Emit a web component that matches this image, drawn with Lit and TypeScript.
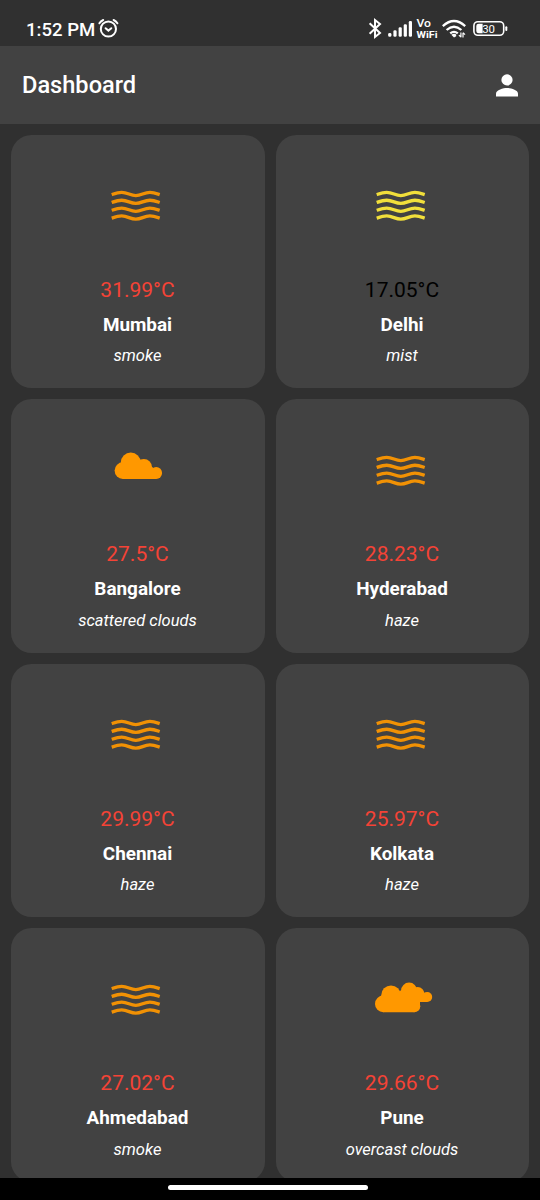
import { LitElement, html, svg, css } from "lit";
import { customElement, property } from "lit/decorators.js";

type Kind = "waves" | "cloud" | "clouds";
interface City { name: string; temp: string; desc: string; kind: Kind; tint?: "mist"; }

const cities: City[] = [
  { name: "Mumbai", temp: "31.99°C", desc: "smoke", kind: "waves" },
  { name: "Delhi", temp: "17.05°C", desc: "mist", kind: "waves", tint: "mist" },
  { name: "Bangalore", temp: "27.5°C", desc: "scattered clouds", kind: "cloud" },
  { name: "Hyderabad", temp: "28.23°C", desc: "haze", kind: "waves" },
  { name: "Chennai", temp: "29.99°C", desc: "haze", kind: "waves" },
  { name: "Kolkata", temp: "25.97°C", desc: "haze", kind: "waves" },
  { name: "Ahmedabad", temp: "27.02°C", desc: "smoke", kind: "waves" },
  { name: "Pune", temp: "29.66°C", desc: "overcast clouds", kind: "clouds" },
];

const icons = {
  waves: svg`<g fill="none" stroke="currentColor" stroke-width="3.3" opacity=".93">
    ${[0, 7.85, 15.7, 23.55].map(
      (y) => svg`<path transform="translate(0 ${y})" d="M11.7 19.6C14.7 18.6 18.2 17.4 21.7 17.4C27.7 17.4 30.2 20.6 35.8 20.6C41.4 20.6 43.9 17.4 49.9 17.4C53.4 17.4 56.7 18.6 59.7 19.6"/>`
    )}</g>`,
  cloud: svg`<g fill="currentColor"><circle cx="22.9" cy="30.6" r="8.3"/><circle cx="30.8" cy="22.6" r="10"/>
    <circle cx="43.8" cy="27.4" r="8.3"/><circle cx="56.2" cy="33" r="5.9"/><path d="M22.7 24H48L53.4 28L56.2 31V38.9H22.7Z"/></g>`,
  clouds: svg`<g fill="currentColor"><circle cx="18.3" cy="34.9" r="8.3"/><circle cx="26" cy="26.3" r="9.8"/>
    <circle cx="38.2" cy="30.5" r="8"/>
    <circle cx="44.1" cy="21.6" r="8"/><circle cx="52.7" cy="24.6" r="6.6"/><circle cx="62.2" cy="28" r="5"/>
    <circle cx="49.3" cy="37.2" r="6"/><path d="M18.3 28L34 22.5L40 19H50L62.2 25V33H55V38L49.3 43.2H18.3Z"/></g>`,
};

@customElement("weather-card")
class WeatherCard extends LitElement {
  @property({ attribute: false }) city!: City;
  static styles = css`
    :host { display: block; }
    .card { box-sizing: border-box; height: 100%; padding: 40.5px 0.5px 0 0; border-radius: 20.6px;
      background: #424242; display: flex; flex-direction: column; align-items: center; color: #fff; }
    .icon { display: block; width: 75px; height: 60px; color: #ff9800; }
    .icon.mist { color: #ffeb3b; }
    .temp { margin-top: 42.9px; font-size: 21px; line-height: 24px; color: #f44336; }
    .temp.mist { color: #000; }
    .name { margin-top: 12px; font-size: 18.9px; line-height: 22px; font-weight: 700; }
    .desc { margin-top: 10.4px; font-size: 16.5px; line-height: 20px; font-style: italic; }
  `;
  render() {
    const c = this.city;
    const tint = c.tint ?? "";
    return html`<div class="card">
      <svg class="icon ${tint}" viewBox="0 0 75 60">${icons[c.kind]}</svg>
      <div class="temp ${tint}">${c.temp}</div>
      <div class="name">${c.name}</div>
      <div class="desc">${c.desc}</div>
    </div>`;
  }
}

@customElement("status-bar")
class StatusBar extends LitElement {
  static styles = css`
    :host { display: flex; height: 46px; box-sizing: border-box; padding: 0 0 0 26px; color: #fff; background: #303030; }
    .time { width: 72px; padding-top: 19px; font-size: 18.6px; line-height: 22px; font-weight: 500; white-space: nowrap; }
    .alarm { width: 22px; height: 46px; }
    .spacer { flex: 1; }
    .system { width: 180px; height: 46px; }
    .vo { font: 500 10.4px Roboto, sans-serif; }
    .wifi { font: 700 8.8px Roboto, sans-serif; }
    .level { font: 400 11.4px Roboto, sans-serif; }
  `;
  render() {
    return html`
      <span class="time">1:52 PM</span>
      <svg class="alarm" viewBox="98 0 22 46" fill="none" stroke="#fff" stroke-width="2" stroke-linecap="round">
        <circle cx="108.4" cy="29" r="7.6"/><path d="M105.6 28.2L108.4 30.6L111.3 28.2M99.4 23.3Q100.8 21 103.2 20M113.6 20Q116 21 117.4 23.3"/>
      </svg>
      <span class="spacer"></span>
      <svg class="system" viewBox="360 0 180 46">
        <path d="M369.6 23.3L380 32.9L375 37V20L380 24.1L369.6 33.7" fill="none" stroke="#fff" stroke-width="2"/>
        <g fill="#fff">
          <rect x="388.2" y="33" width="3.2" height="3.8" rx="1.3"/><rect x="393.4" y="30.3" width="3.2" height="6.5" rx="1.3"/>
          <rect x="398.6" y="27.3" width="3.2" height="9.5" rx="1.3"/><rect x="403.7" y="24.2" width="3.2" height="12.6" rx="1.3"/>
          <rect x="408.8" y="21" width="3.2" height="15.8" rx="1.3"/>
          <text class="vo" x="416.5" y="27" textLength="14.5" lengthAdjust="spacingAndGlyphs">Vo</text>
          <text class="wifi" x="416.5" y="37.7" textLength="21" lengthAdjust="spacingAndGlyphs">WiFi</text>
        </g>
        <g fill="none" stroke="#fff" stroke-width="2.3">
          <path d="M442.8 26.1Q454 16 465.2 26.1M446.6 30Q454 23.4 461.4 30M450.2 33.4Q454 30.3 457.8 33.4"/>
        </g>
        <path d="M451.3 34.8Q454 32.8 456.2 34.4V36.3L454 37.5Z" fill="#fff"/>
        <path d="M460.9 32.4V37.2M463 32.7V37.5M458.9 35.2L460.9 37.2M465 34.7L463 32.7" stroke="#fff" stroke-width="1.2" fill="none"/>
        <rect x="473.9" y="21.7" width="29.8" height="13.6" rx="4" fill="none" stroke="#fff" stroke-width="1.6"/>
        <path d="M478.8 23.8H482.6V33.2H478.8Q476.3 33.2 476.3 31V26Q476.3 23.8 478.8 23.8Z" fill="#fff"/>
        <rect x="505.3" y="26.3" width="2" height="4.6" rx="1" fill="#fff"/>
        <text class="level" x="482.2" y="32.7" fill="#fff" textLength="12.8">30</text>
      </svg>`;
  }
}

@customElement("app-root")
class AppRoot extends LitElement {
  static styles = css`
    :host { display: flex; flex-direction: column; width: 540px; height: 1200px; overflow: hidden;
      background: #303030; font-family: Roboto, sans-serif; }
    .bar { box-sizing: border-box; flex: none; height: 77.6px; padding: 0 19px 0 22px; background: #424242; color: #fff;
      display: flex; align-items: center; justify-content: space-between; }
    .title { font-size: 23.6px; line-height: 30px; font-weight: 500; }
    .person { width: 28px; height: 33px; margin-top: 1px; }
    .scroll { flex: 1; min-height: 0; overflow: hidden; padding: 11px 11px 0; }
    .grid { display: grid; grid-template-columns: 1fr 1fr; grid-auto-rows: 253.5px; gap: 11px; }
    .nav { flex: none; height: 22px; background: #000; display: flex; justify-content: center; }
    .pill { width: 200px; height: 5px; margin: 7px 4px 0 0; border-radius: 3px; background: #fff; }
  `;
  render() {
    return html`
      <status-bar></status-bar>
      <header class="bar"><span class="title">Dashboard</span>
        <svg class="person" viewBox="0 0 28 33" fill="#fff"><circle cx="14" cy="10.9" r="5.6"/><path d="M3 27.6V24.6C3 21 10.3 19 14 19S25 21 25 24.6V27.6Z"/></svg>
      </header>
      <main class="scroll"><div class="grid">${cities.map((c) => html`<weather-card .city=${c}></weather-card>`)}</div></main>
      <footer class="nav"><div class="pill"></div></footer>`;
  }
}
